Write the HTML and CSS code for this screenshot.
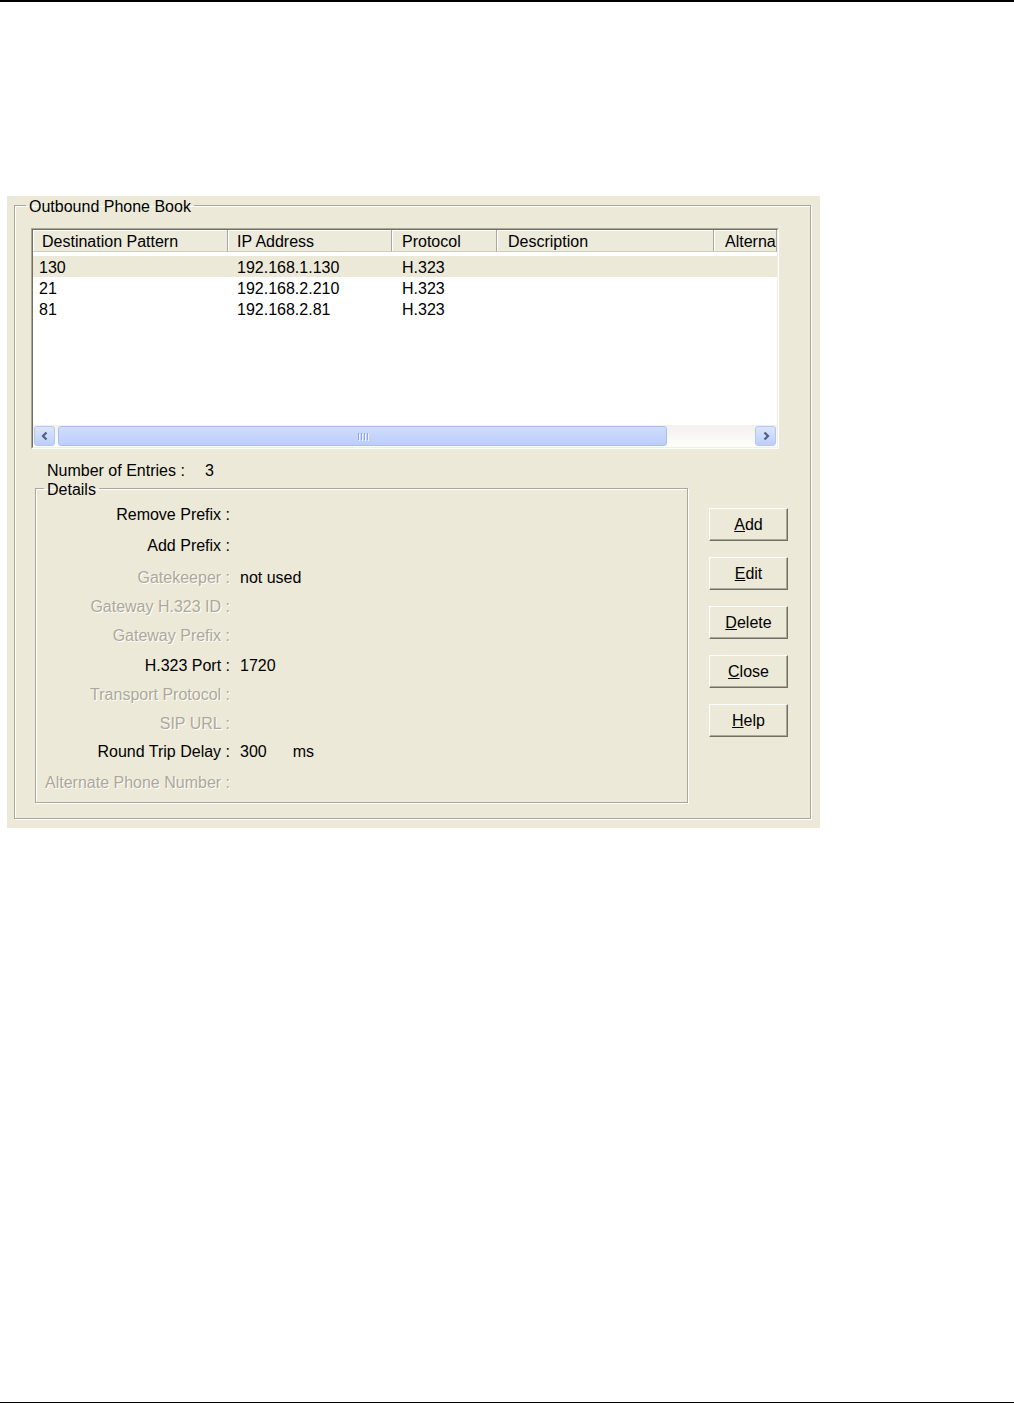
FILE: index.html
```html
<!DOCTYPE html>
<html lang="en">
<head>
    <meta charset="UTF-8">
    <title>Outbound Phone Book</title>
    <link rel="stylesheet" href="styles.css">
</head>
<body>
<div class="page">
    <div class="rule"></div>

    <div class="dialog">
        <fieldset class="group phonebook">
            <legend>Outbound Phone Book</legend>

            <!-- list view -->
            <div class="list">
                <div class="list-inner">
                    <div class="list-head">
                        <div class="hcell">Destination Pattern</div>
                        <div class="hcell">IP Address</div>
                        <div class="hcell">Protocol</div>
                        <div class="hcell">Description</div>
                        <div class="hcell">Alternate Phone Number</div>
                    </div>
                    <div class="list-body">
                        <div class="row selected">
                            <div class="cell first">130</div>
                            <div class="cell">192.168.1.130</div>
                            <div class="cell">H.323</div>
                            <div class="cell"></div>
                            <div class="cell"></div>
                        </div>
                        <div class="row">
                            <div class="cell first">21</div>
                            <div class="cell">192.168.2.210</div>
                            <div class="cell">H.323</div>
                            <div class="cell"></div>
                            <div class="cell"></div>
                        </div>
                        <div class="row">
                            <div class="cell first">81</div>
                            <div class="cell">192.168.2.81</div>
                            <div class="cell">H.323</div>
                            <div class="cell"></div>
                            <div class="cell"></div>
                        </div>
                    </div>
                    <div class="hscroll">
                        <div class="sb-btn">
                            <svg width="10" height="10" viewBox="0 0 10 10"><path d="M6.5 1.5 L3 5 L6.5 8.5" fill="none" stroke="#4d6185" stroke-width="2.2"/></svg>
                        </div>
                        <div class="sb-track">
                            <div class="sb-thumb">
                                <span class="grip"></span><span class="grip"></span><span class="grip"></span><span class="grip"></span>
                            </div>
                        </div>
                        <div class="sb-btn">
                            <svg width="10" height="10" viewBox="0 0 10 10"><path d="M3.5 1.5 L7 5 L3.5 8.5" fill="none" stroke="#4d6185" stroke-width="2.2"/></svg>
                        </div>
                    </div>
                </div>
            </div>

            <div class="lower">
                <div class="lower-left">
                    <div class="entries"><span class="entries-label">Number of Entries :</span><span>3</span></div>

                    <fieldset class="group details">
                        <legend>Details</legend>
                        <div class="detail-grid">
                            <div class="lbl">Remove Prefix :</div><div class="val"></div>
                            <div class="lbl">Add Prefix :</div><div class="val"></div>
                            <div class="lbl off">Gatekeeper :</div><div class="val">not used</div>
                            <div class="lbl off">Gateway H.323 ID :</div><div class="val"></div>
                            <div class="lbl off">Gateway Prefix :</div><div class="val"></div>
                            <div class="lbl">H.323 Port :</div><div class="val">1720</div>
                            <div class="lbl off">Transport Protocol :</div><div class="val"></div>
                            <div class="lbl off">SIP URL :</div><div class="val"></div>
                            <div class="lbl">Round Trip Delay :</div><div class="val">300<span class="unit">ms</span></div>
                            <div class="lbl off">Alternate Phone Number :</div><div class="val"></div>
                        </div>
                    </fieldset>
                </div>

                <div class="buttons">
                    <button class="btn"><u>A</u>dd</button>
                    <button class="btn"><u>E</u>dit</button>
                    <button class="btn"><u>D</u>elete</button>
                    <button class="btn"><u>C</u>lose</button>
                    <button class="btn"><u>H</u>elp</button>
                </div>
            </div>
        </fieldset>
    </div>

    <div class="rule bottom"></div>
</div>
</body>
</html>
```

FILE: styles.css
```css
body {
    margin: 0;
    background-color: #fff;
    font-family: "Liberation Sans", Arial, sans-serif;
    font-size: 16px;
    color: #000;
}

.page {
    height: 1404px;
    display: flex;
    flex-direction: column;
}

.rule {
    height: 2px;
    background-color: #000;
}

.rule.bottom {
    height: 1px;
    margin-top: auto;
    margin-bottom: 1px;
}

/* dialog panel */
.dialog {
    width: 813px;
    height: 632px;
    margin: 194px 0 0 7px;
    padding: 0 9px 9px 7px;
    box-sizing: border-box;
    background-color: #ece9d8;
    display: flex;
}

.group {
    margin: 0;
    padding: 0;
    min-width: 0;
    border: 1px solid #aca899;
    box-shadow: 1px 1px 0 #fff, inset 1px 1px 0 #fff;
}

.group legend {
    padding: 3px 3px 0;
    line-height: 16px;
}

.phonebook {
    flex: 1;
}

.phonebook > legend {
    margin-left: 11px;
}

/* list view */
.list {
    width: 748px;
    height: 221px;
    margin: 13px 0 0 16px;
    box-sizing: border-box;
    border: 1px solid;
    border-color: #aca899 #fff #fff #aca899;
}

.list-inner {
    height: 100%;
    box-sizing: border-box;
    border: 1px solid;
    border-color: #716f64 #f1efe2 #f1efe2 #716f64;
    background-color: #fff;
    display: flex;
    flex-direction: column;
    overflow: hidden;
}

.list-head,
.row {
    display: grid;
    grid-template-columns: 195px 164px 105px 217px 63px;
}

.list-head {
    height: 22px;
    flex: none;
}

.hcell {
    padding: 2px 0 0 9px;
    line-height: 20px;
    white-space: nowrap;
    overflow: hidden;
    background-color: #ebeadb;
    border-right: 1px solid #aca899;
    border-bottom: 1px solid #d0cdbd;
    box-shadow: inset 1px 1px 0 #fff;
}

.hcell:nth-child(3) {
    padding-left: 10px;
}

.hcell:nth-child(n+4) {
    padding-left: 11px;
}

.list-body {
    flex: 1;
    padding-top: 4px;
}

.row {
    height: 21px;
    box-sizing: border-box;
    padding-top: 2px;
    line-height: 19px;
}

.row.selected {
    background-color: #ece9d8;
}

.cell {
    padding-left: 9px;
    white-space: nowrap;
}

.cell.first {
    padding-left: 6px;
}

.cell:nth-child(3) {
    padding-left: 10px;
}

/* horizontal scroll bar */
.hscroll {
    height: 22px;
    flex: none;
    display: flex;
    background: linear-gradient(#f3f1ec, #fefefb);
}

.sb-btn {
    width: 21px;
    height: 20px;
    margin: 1px;
    box-sizing: border-box;
    border: 1px solid #b4c6f2;
    border-radius: 3px;
    background: linear-gradient(#dce6fd, #bccefa);
    display: flex;
    align-items: center;
    justify-content: center;
}

.sb-track {
    flex: 1;
    display: flex;
    padding: 1px 0;
}

.sb-thumb {
    width: 609px;
    margin-left: 2px;
    box-sizing: border-box;
    border: 1px solid #a9bef0;
    border-radius: 3px;
    background: linear-gradient(#cfdcfc, #bccefa);
    display: flex;
    align-items: center;
    justify-content: center;
    gap: 2px;
}

.grip {
    width: 1px;
    height: 7px;
    background-color: #8ca5e6;
    box-shadow: 1px 1px 0 #eef3fe;
}

/* lower part */
.lower {
    display: flex;
    margin-left: 20px;
}

.entries {
    margin: 14px 0 0 12px;
    line-height: 16px;
}

.entries-label {
    display: inline-block;
    width: 158px;
}

.details {
    width: 653px;
    height: 324px;
    box-sizing: border-box;
}

.details > legend {
    margin-left: 8px;
}

.detail-grid {
    display: grid;
    grid-template-columns: 194px auto;
    grid-template-rows: 31px 32px 29px 29px 30px 29px 29px 28px 31px 20px;
    column-gap: 10px;
    padding-top: 9px;
    line-height: 16px;
}

.lbl {
    text-align: right;
    white-space: nowrap;
}

.lbl.off {
    color: #aca899;
    text-shadow: 1px 1px 0 #fff;
}

.unit {
    margin-left: 26px;
}

/* buttons */
.buttons {
    display: flex;
    flex-direction: column;
    gap: 16px;
    margin-left: 21px;
    padding-top: 59px;
}

.btn {
    width: 79px;
    height: 33px;
    padding: 0;
    font-family: "Liberation Sans", Arial, sans-serif;
    font-size: 16px;
    color: #000;
    background-color: #ece9d8;
    border: 1px solid;
    border-color: #fff #716f64 #716f64 #fff;
    box-shadow: inset -1px -1px 0 #aca899;
    border-radius: 0;
}
```
